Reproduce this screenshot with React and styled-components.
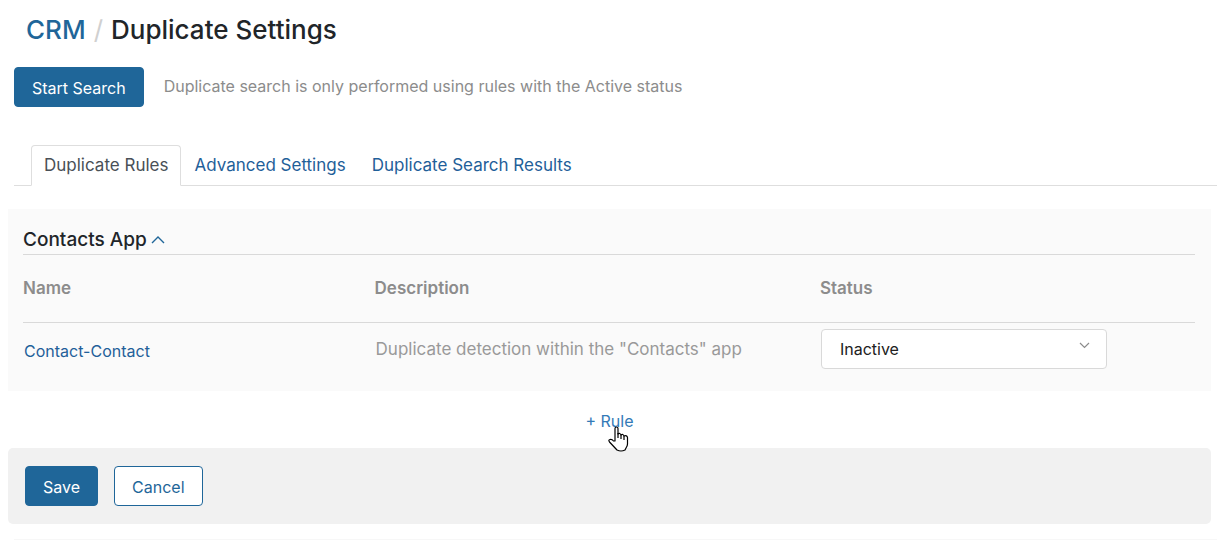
import React from "react";
import styled, { createGlobalStyle } from "styled-components";

const GlobalStyle = createGlobalStyle`
  *, *::before, *::after { box-sizing: border-box; }
  body {
    margin: 0;
    background: #fff;
    color: #212529;
    font-family: Inter, "Liberation Sans", sans-serif;
    font-size: 17px;
    line-height: 24px;
  }
  button, select { font: inherit; }
`;

const Page = styled.main`
  padding: 12px 7px 0 8px;
`;

const Breadcrumb = styled.nav`
  display: flex;
  align-items: center;
  gap: 8px;
  padding-left: 18px;
  font-size: 26px;
  line-height: 36px;
`;

const BreadcrumbLink = styled.a`
  color: #1f6699;
  font-weight: 500;
  text-decoration: none;
`;

const Divider = styled.span`
  color: #d0d0d0;
`;

const Title = styled.h1`
  margin: 0;
  font-size: inherit;
  font-weight: 500;
`;

const SearchBar = styled.div`
  display: flex;
  align-items: center;
  gap: 20px;
  margin-top: 19px;
  padding-left: 6px;
`;

const Button = styled.button`
  height: 40px;
  padding: 1px 17px 0;
  border: 1px solid #1f6699;
  border-radius: 4px;
  background: ${(p) => (p.$outline ? "#fff" : "#1f6699")};
  color: ${(p) => (p.$outline ? "#1f6699" : "#fff")};
  font-size: 16px;
  cursor: pointer;
`;

const Hint = styled.p`
  margin: 0;
  padding-bottom: 2px;
  color: #8c8c8c;
  font-size: 16px;
`;

const Tabs = styled.div`
  display: flex;
  margin: 38px 0 0 6px;
  padding-left: 17px;
  border-bottom: 1px solid #dedede;
`;

const Tab = styled.button`
  height: 41px;
  margin-bottom: -1px;
  padding: 0 12px 2px;
  border: 1px solid transparent;
  border-color: ${(p) => (p.$active ? "#dedede #dedede #fff" : "transparent")};
  border-radius: 4px 4px 0 0;
  background: ${(p) => (p.$active ? "#fff" : "transparent")};
  color: ${(p) => (p.$active ? "#495057" : "#1f6099")};
  cursor: pointer;
`;

const Panel = styled.section`
  margin: 23px 6px 0 0;
  padding: 16px 16px 16px 15px;
  background: #fafafa;
`;

const PanelTitle = styled.h2`
  margin: 0;
  border-bottom: 1px solid #d9d9d9;
  font-size: 19px;
  font-weight: 500;
  line-height: 29px;
`;

const Toggle = styled.button`
  display: flex;
  align-items: center;
  gap: 4px;
  padding: 0;
  border: 0;
  background: none;
  color: inherit;
  cursor: pointer;
`;

const Rules = styled.table`
  width: 100%;
  border-collapse: collapse;
  table-layout: fixed;
`;

const HeadCell = styled.th`
  width: ${(p) => p.$width};
  height: 67px;
  padding: 0;
  border-bottom: 1px solid #d9d9d9;
  color: #8c8c8c;
  font-weight: 600;
  text-align: left;
`;

const Cell = styled.td`
  height: 53px;
  padding: 0 1px;
  color: #999;
`;

const RuleLink = styled.a`
  display: inline-block;
  padding-top: 4px;
  color: #1f6099;
  font-size: 16px;
  text-decoration: none;
`;

const SelectBox = styled.div`
  display: flex;
  align-items: center;
  width: 286px;
  max-width: 100%;
`;

const Select = styled.select`
  appearance: none;
  flex: 1;
  height: 40px;
  padding: 0 18px;
  border: 1px solid #d9d9d9;
  border-radius: 4px;
  background: #fff;
  color: #212121;
  font-size: 16px;
`;

const SelectArrow = styled.svg`
  margin: 0 17px 6px -28px;
  pointer-events: none;
`;

const AddRow = styled.div`
  display: flex;
  justify-content: center;
  margin-right: 6px;
  padding: 18px 0 15px;
`;

const AddRule = styled.button`
  position: relative;
  padding: 0;
  border: 0;
  background: none;
  color: #337ab7;
  font-size: 16px;
  cursor: pointer;
`;

const Pointer = styled.svg`
  position: absolute;
  top: 17px;
  left: 22px;
`;

const Actions = styled.footer`
  display: flex;
  gap: 16px;
  margin: 0 6px 0 0;
  padding: 18px 17px;
  border-radius: 5px;
  background: #f1f1f1;
`;

const EndLine = styled.hr`
  margin: 15px 0 0 6px;
  border: 0;
  border-top: 1px solid #f7f7f7;
`;

export default function App() {
  return (
    <>
      <GlobalStyle />
      <Page>
        <Breadcrumb aria-label="Breadcrumb">
          <BreadcrumbLink href="#crm">CRM</BreadcrumbLink>
          <Divider>/</Divider>
          <Title>Duplicate Settings</Title>
        </Breadcrumb>

        <SearchBar>
          <Button type="button">Start Search</Button>
          <Hint>Duplicate search is only performed using rules with the Active status</Hint>
        </SearchBar>

        <Tabs role="tablist">
          <Tab type="button" role="tab" aria-selected="true" $active>Duplicate Rules</Tab>
          <Tab type="button" role="tab" aria-selected="false">Advanced Settings</Tab>
          <Tab type="button" role="tab" aria-selected="false">Duplicate Search Results</Tab>
        </Tabs>

        <Panel>
          <PanelTitle>
            <Toggle type="button" aria-expanded="true">
              Contacts App
              <svg width="14" height="8" viewBox="0 0 14 8" fill="none" stroke="#1f6699" strokeWidth="1.4" aria-hidden="true">
                <path d="M1 7 7 1l6 6" />
              </svg>
            </Toggle>
          </PanelTitle>
          <Rules>
            <thead>
              <tr>
                <HeadCell scope="col" $width="30%">Name</HeadCell>
                <HeadCell scope="col" $width="38%">Description</HeadCell>
                <HeadCell scope="col" $width="32%">Status</HeadCell>
              </tr>
            </thead>
            <tbody>
              <tr>
                <Cell><RuleLink href="#contact-contact">Contact-Contact</RuleLink></Cell>
                <Cell>Duplicate detection within the "Contacts" app</Cell>
                <Cell>
                  <SelectBox>
                    <Select aria-label="Status" defaultValue="Inactive">
                      <option>Inactive</option>
                      <option>Active</option>
                    </Select>
                    <SelectArrow width="11" height="7" viewBox="0 0 11 7" fill="none" stroke="#8c8c8c" strokeWidth="1.2" aria-hidden="true">
                      <path d="m1 1 4.500 4.500L10 1" />
                    </SelectArrow>
                  </SelectBox>
                </Cell>
              </tr>
            </tbody>
          </Rules>
        </Panel>

        <AddRow>
          <AddRule type="button">
            + Rule
            <Pointer width="22" height="26" viewBox="0 0 22 26" fill="#fff" stroke="#000" strokeWidth="1.2" strokeLinejoin="round" aria-hidden="true">
              <path d="M8 15V2.500a1.500 1.500 0 0 1 3 0V8q2-1.500 3 1 2-1.500 3 1 3-1 3.500 1.500V18q0 2-1.500 4l-1 2q-4 2-8 0L2.500 16q-1.500-2 .5-2.500 2-.5 3.500 1.500L8 15Z" />
              <path d="M11 7v5M14 9v4M17 10v4" fill="none" />
            </Pointer>
          </AddRule>
        </AddRow>

        <Actions>
          <Button type="button">Save</Button>
          <Button type="button" $outline>Cancel</Button>
        </Actions>
        <EndLine />
      </Page>
    </>
  );
}
